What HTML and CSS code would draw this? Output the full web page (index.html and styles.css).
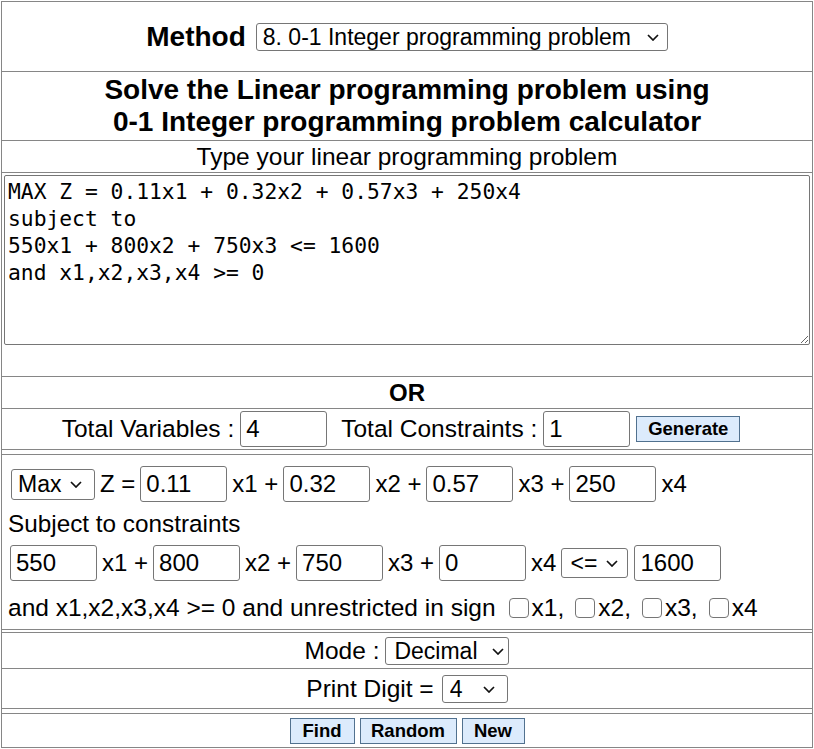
FILE: index.html
```html
<!DOCTYPE html>
<html>
<head>
<meta charset="utf-8">
<link rel="stylesheet" href="styles.css">
</head>
<body>
<div class="calc">
  <div class="row row-method">
    <span class="method-label">Method</span>
    <span class="selwrap">
      <select class="sel sel-method"><option>8. 0-1 Integer programming problem</option></select>
      <svg class="chev" width="12" height="7" viewBox="0 0 12 7"><path d="M1 1L6 6L11 1"/></svg>
    </span>
  </div>
  <div class="row row-title">
    <h1 class="title">Solve the Linear programming problem using<br>0-1 Integer programming problem calculator</h1>
  </div>
  <div class="row row-type">Type your linear programming problem</div>
  <div class="row row-area">
    <textarea class="problem" spellcheck="false">MAX Z = 0.11x1 + 0.32x2 + 0.57x3 + 250x4
subject to
550x1 + 800x2 + 750x3 &lt;= 1600
and x1,x2,x3,x4 &gt;= 0</textarea>
  </div>
  <div class="row row-or">OR</div>
  <div class="row row-totals">
    <span>Total Variables :</span>
    <input class="num" value="4">
    <span class="gap-l">Total Constraints :</span>
    <input class="num" value="1">
    <button class="btn btn-gen">Generate</button>
  </div>
  <div class="sep sep-5"></div>
  <div class="row section">
    <div class="line line-obj">
      <span class="selwrap">
        <select class="sel sel-max"><option>Max</option></select>
        <svg class="chev chev-max" width="12" height="7" viewBox="0 0 12 7"><path d="M1 1L6 6L11 1"/></svg>
      </span>
      <span>Z =</span>
      <input class="num" value="0.11">
      <span>x1 +</span>
      <input class="num" value="0.32">
      <span>x2 +</span>
      <input class="num" value="0.57">
      <span>x3 +</span>
      <input class="num" value="250">
      <span>x4</span>
    </div>
    <div class="line line-subject">Subject to constraints</div>
    <div class="line line-con">
      <input class="num" value="550">
      <span>x1 +</span>
      <input class="num" value="800">
      <span>x2 +</span>
      <input class="num" value="750">
      <span>x3 +</span>
      <input class="num" value="0">
      <span>x4</span>
      <span class="selwrap">
        <select class="sel sel-op"><option>&lt;=</option></select>
        <svg class="chev chev-op" width="12" height="7" viewBox="0 0 12 7"><path d="M1 1L6 6L11 1"/></svg>
      </span>
      <input class="num rhs" value="1600">
    </div>
    <div class="line line-and">
      <span>and x1,x2,x3,x4 &gt;= 0 and unrestricted in sign</span>
      <label class="chk first"><input type="checkbox">x1,</label>
      <label class="chk"><input type="checkbox">x2,</label>
      <label class="chk"><input type="checkbox">x3,</label>
      <label class="chk"><input type="checkbox">x4</label>
    </div>
  </div>
  <div class="sep sep-3"></div>
  <div class="row row-mode">
    <span>Mode :</span>
    <span class="selwrap">
      <select class="sel sel-mode"><option>Decimal</option></select>
      <svg class="chev chev-mode" width="12" height="7" viewBox="0 0 12 7"><path d="M1 1L6 6L11 1"/></svg>
    </span>
  </div>
  <div class="row row-digit">
    <span>Print Digit =</span>
    <span class="selwrap">
      <select class="sel sel-digit"><option>4</option></select>
      <svg class="chev chev-digit" width="12" height="7" viewBox="0 0 12 7"><path d="M1 1L6 6L11 1"/></svg>
    </span>
  </div>
  <div class="sep sep-5"></div>
  <div class="row row-buttons">
    <button class="btn btn-find">Find</button>
    <button class="btn btn-random">Random</button>
    <button class="btn btn-new">New</button>
  </div>
</div>
</body>
</html>
```
FILE: styles.css
```css
* { box-sizing: border-box; }
html, body { margin: 0; padding: 0; background: #fff; }
body {
  font-family: "Liberation Sans", Arial, sans-serif;
  font-size: 24.5px;
  color: #000;
}
.calc {
  margin: 1px 0 0 1px;
  width: 812px;
  border: 1px solid #868686;
}
.row {
  border-bottom: 1px solid #868686;
  display: flex;
  align-items: center;
  justify-content: center;
}
.sep { border-bottom: 1px solid #868686; }
.sep-5 { height: 5px; }
.sep-3 { height: 3px; }

.row-method { height: 70px; }
.method-label { font-weight: bold; font-size: 28px; margin-right: 10px; }

.selwrap { position: relative; display: inline-flex; align-items: center; }
.sel {
  -webkit-appearance: none;
  appearance: none;
  font-family: "Liberation Sans", Arial, sans-serif;
  font-size: 23px;
  color: #000;
  background: #fff;
  border: 1px solid #767676;
  border-radius: 3px;
  padding: 0 0 0 6px;
  outline: none;
}
.chev {
  position: absolute;
  right: 9px;
  top: 50%;
  margin-top: -3px;
  fill: none;
  stroke: #111;
  stroke-width: 1.7;
}
.sel-method { width: 412px; height: 28px; }

.row-title { height: 69px; }
.title {
  margin: 0;
  font-size: 28px;
  line-height: 32px;
  font-weight: bold;
  text-align: center;
}
.row-type { height: 32px; }
.row-area {
  height: 204px;
  align-items: flex-start;
  justify-content: flex-start;
  padding: 2px 0 0 2px;
}
.problem {
  width: 806px;
  height: 170px;
  border: 1px solid #767676;
  border-radius: 2px;
  padding: 2px 3px;
  font-family: "DejaVu Sans Mono", "Liberation Mono", monospace;
  font-size: 21.3px;
  line-height: 27px;
  color: #000;
  resize: vertical;
  outline: none;
}
.row-or { height: 32px; font-weight: bold; font-size: 24px; }
.row-totals { height: 41px; }
.num {
  width: 87px;
  height: 36px;
  border: 1px solid #767676;
  border-radius: 3px;
  padding: 0 5px;
  font-family: "Liberation Sans", Arial, sans-serif;
  font-size: 24px;
  color: #000;
  background: #fff;
}
.row-totals .num { margin-left: 6px; }
.gap-l { margin-left: 14px; }
.btn {
  font-family: "Liberation Sans", Arial, sans-serif;
  font-weight: bold;
  font-size: 18.5px;
  color: #000;
  background: #dcebfc;
  border: 1px solid #51718f;
  height: 26px;
  padding: 0;
}
.btn-gen { width: 104px; margin-left: 6px; margin-right: 12px; }

.section {
  display: block;
  height: 175px;
  padding: 11px 0 0 6px;
  font-size: 24px;
}
.line { display: flex; align-items: center; gap: 5px; }
.line-obj { height: 36px; padding-left: 3px; }
.sel-max { width: 84px; height: 31px; }
.chev-max { right: 13px; }
.line-subject { height: 43px; padding-left: 0; font-size: 24.3px; }
.line-con { height: 36px; padding-left: 2px; }
.sel-op { width: 67px; height: 30px; padding-left: 8px; }
.chev-op { right: 10px; }
.rhs { margin-left: 1px; }
.line-and { height: 38px; margin-top: 8px; padding-left: 0; gap: 0; font-size: 24.5px; }
.chk { display: inline-flex; align-items: center; }
.chk input {
  -webkit-appearance: none;
  appearance: none;
  width: 20px;
  height: 20px;
  margin: 0 3px 0 11px;
  border: 1px solid #767676;
  border-radius: 4px;
  background: #fff;
}
.chk.first input { margin-left: 13px; }

.row-mode { height: 36px; }
.row-mode > span:first-child { margin-right: 6px; }
.sel-mode { width: 124px; height: 28px; padding-left: 8px; }
.chev-mode { right: 5px; }
.row-digit { height: 40px; }
.row-digit > span:first-child { margin-right: 8px; }
.sel-digit { width: 66px; height: 28px; padding-left: 7px; }
.chev-digit { right: 13px; }
.row-buttons { height: 33px; border-bottom: none; gap: 5px; }
.btn-find { width: 65px; }
.btn-random { width: 97px; }
.btn-new { width: 63px; }
```
